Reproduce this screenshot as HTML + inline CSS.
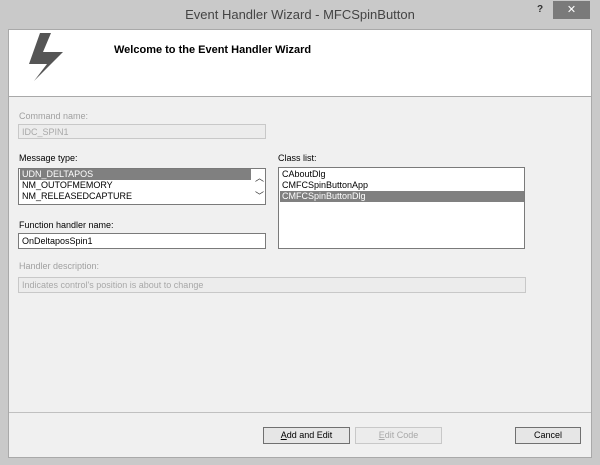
<!DOCTYPE html><html><head><style>
*{margin:0;padding:0;box-sizing:border-box}
body{width:600px;height:465px;background:#c9c9c9;font-family:"Liberation Sans",sans-serif;font-size:9px;color:#000;position:relative;overflow:hidden}
.a{position:absolute}
.t{font-size:13px;color:#444;left:0;width:600px;text-align:center;top:7px}
.lbl{font-size:9px}
.dis{color:#a0a0a0}
.f{background:#fff;border:1px solid #7a7a7a;padding:2px 3px;font-size:9px}
.fd{background:#ececec;border:1px solid #c8c8c8;color:#a8a8a8;padding:2px 3px;font-size:9px}
.btn{border:1px solid #707070;background:#e6e6e6;text-align:center;font-size:9px;line-height:14px}
.row{height:11px;line-height:11px;padding-left:2px;white-space:nowrap}
.sel{background:#808080;color:#fff}
</style></head><body>
<div class="a t">Event Handler Wizard - MFCSpinButton</div>
<div class="a" style="left:537px;top:4px;font-size:10px;font-weight:bold;color:#333">?</div>
<div class="a" style="left:553px;top:1px;width:37px;height:18px;background:#7a7a7a;color:#fff;text-align:center;font-size:11px;line-height:18px">✕</div>
<div class="a" style="left:8px;top:29px;width:584px;height:429px;background:#f0f0f0;border:1px solid #a9a9a9"></div>
<div class="a" style="left:9px;top:30px;width:582px;height:67px;background:#fff;border-bottom:1px solid #a9a9a9"></div>
<svg class="a" style="left:0;top:0" width="80" height="100"><polygon points="40,33 51,33 43,52 63,52 34,81 47,64 29,64" fill="#555"/></svg>
<div class="a" style="left:114px;top:44px;font-size:11px;font-weight:bold">Welcome to the Event Handler Wizard</div>
<div class="a lbl dis" style="left:19px;top:111px">Command name:</div>
<div class="a fd" style="left:18px;top:124px;width:248px;height:15px">IDC_SPIN1</div>
<div class="a lbl" style="left:19px;top:153px">Message type:</div>
<div class="a f" style="left:18px;top:168px;width:248px;height:37px;padding:0 0 0 1px">
<div class="row sel" style="width:231px">UDN_DELTAPOS</div><div class="row">NM_OUTOFMEMORY</div><div class="row">NM_RELEASEDCAPTURE</div>
<div class="a" style="left:236px;top:2px;font-size:9px;color:#333">︿</div><div class="a" style="left:236px;top:20px;font-size:9px;color:#333">﹀</div></div>
<div class="a lbl" style="left:19px;top:220px">Function handler name:</div>
<div class="a f" style="left:18px;top:233px;width:248px;height:16px">OnDeltaposSpin1</div>
<div class="a lbl" style="left:278px;top:153px">Class list:</div>
<div class="a f" style="left:278px;top:167px;width:247px;height:82px;padding:1px 0 0 1px">
<div class="row">CAboutDlg</div><div class="row">CMFCSpinButtonApp</div><div class="row sel">CMFCSpinButtonDlg</div></div>
<div class="a lbl dis" style="left:19px;top:261px">Handler description:</div>
<div class="a fd" style="left:18px;top:277px;width:508px;height:16px">Indicates control's position is about to change</div>
<div class="a" style="left:9px;top:412px;width:582px;border-top:1px solid #c0c0c0"></div>
<div class="a btn" style="left:263px;top:427px;width:87px;height:17px"><u>A</u>dd and Edit</div>
<div class="a btn" style="left:355px;top:427px;width:87px;height:17px;border-color:#c8c8c8;background:#ececec;color:#a8a8a8"><u>E</u>dit Code</div>
<div class="a btn" style="left:515px;top:427px;width:66px;height:17px">Cancel</div>
</body></html>
